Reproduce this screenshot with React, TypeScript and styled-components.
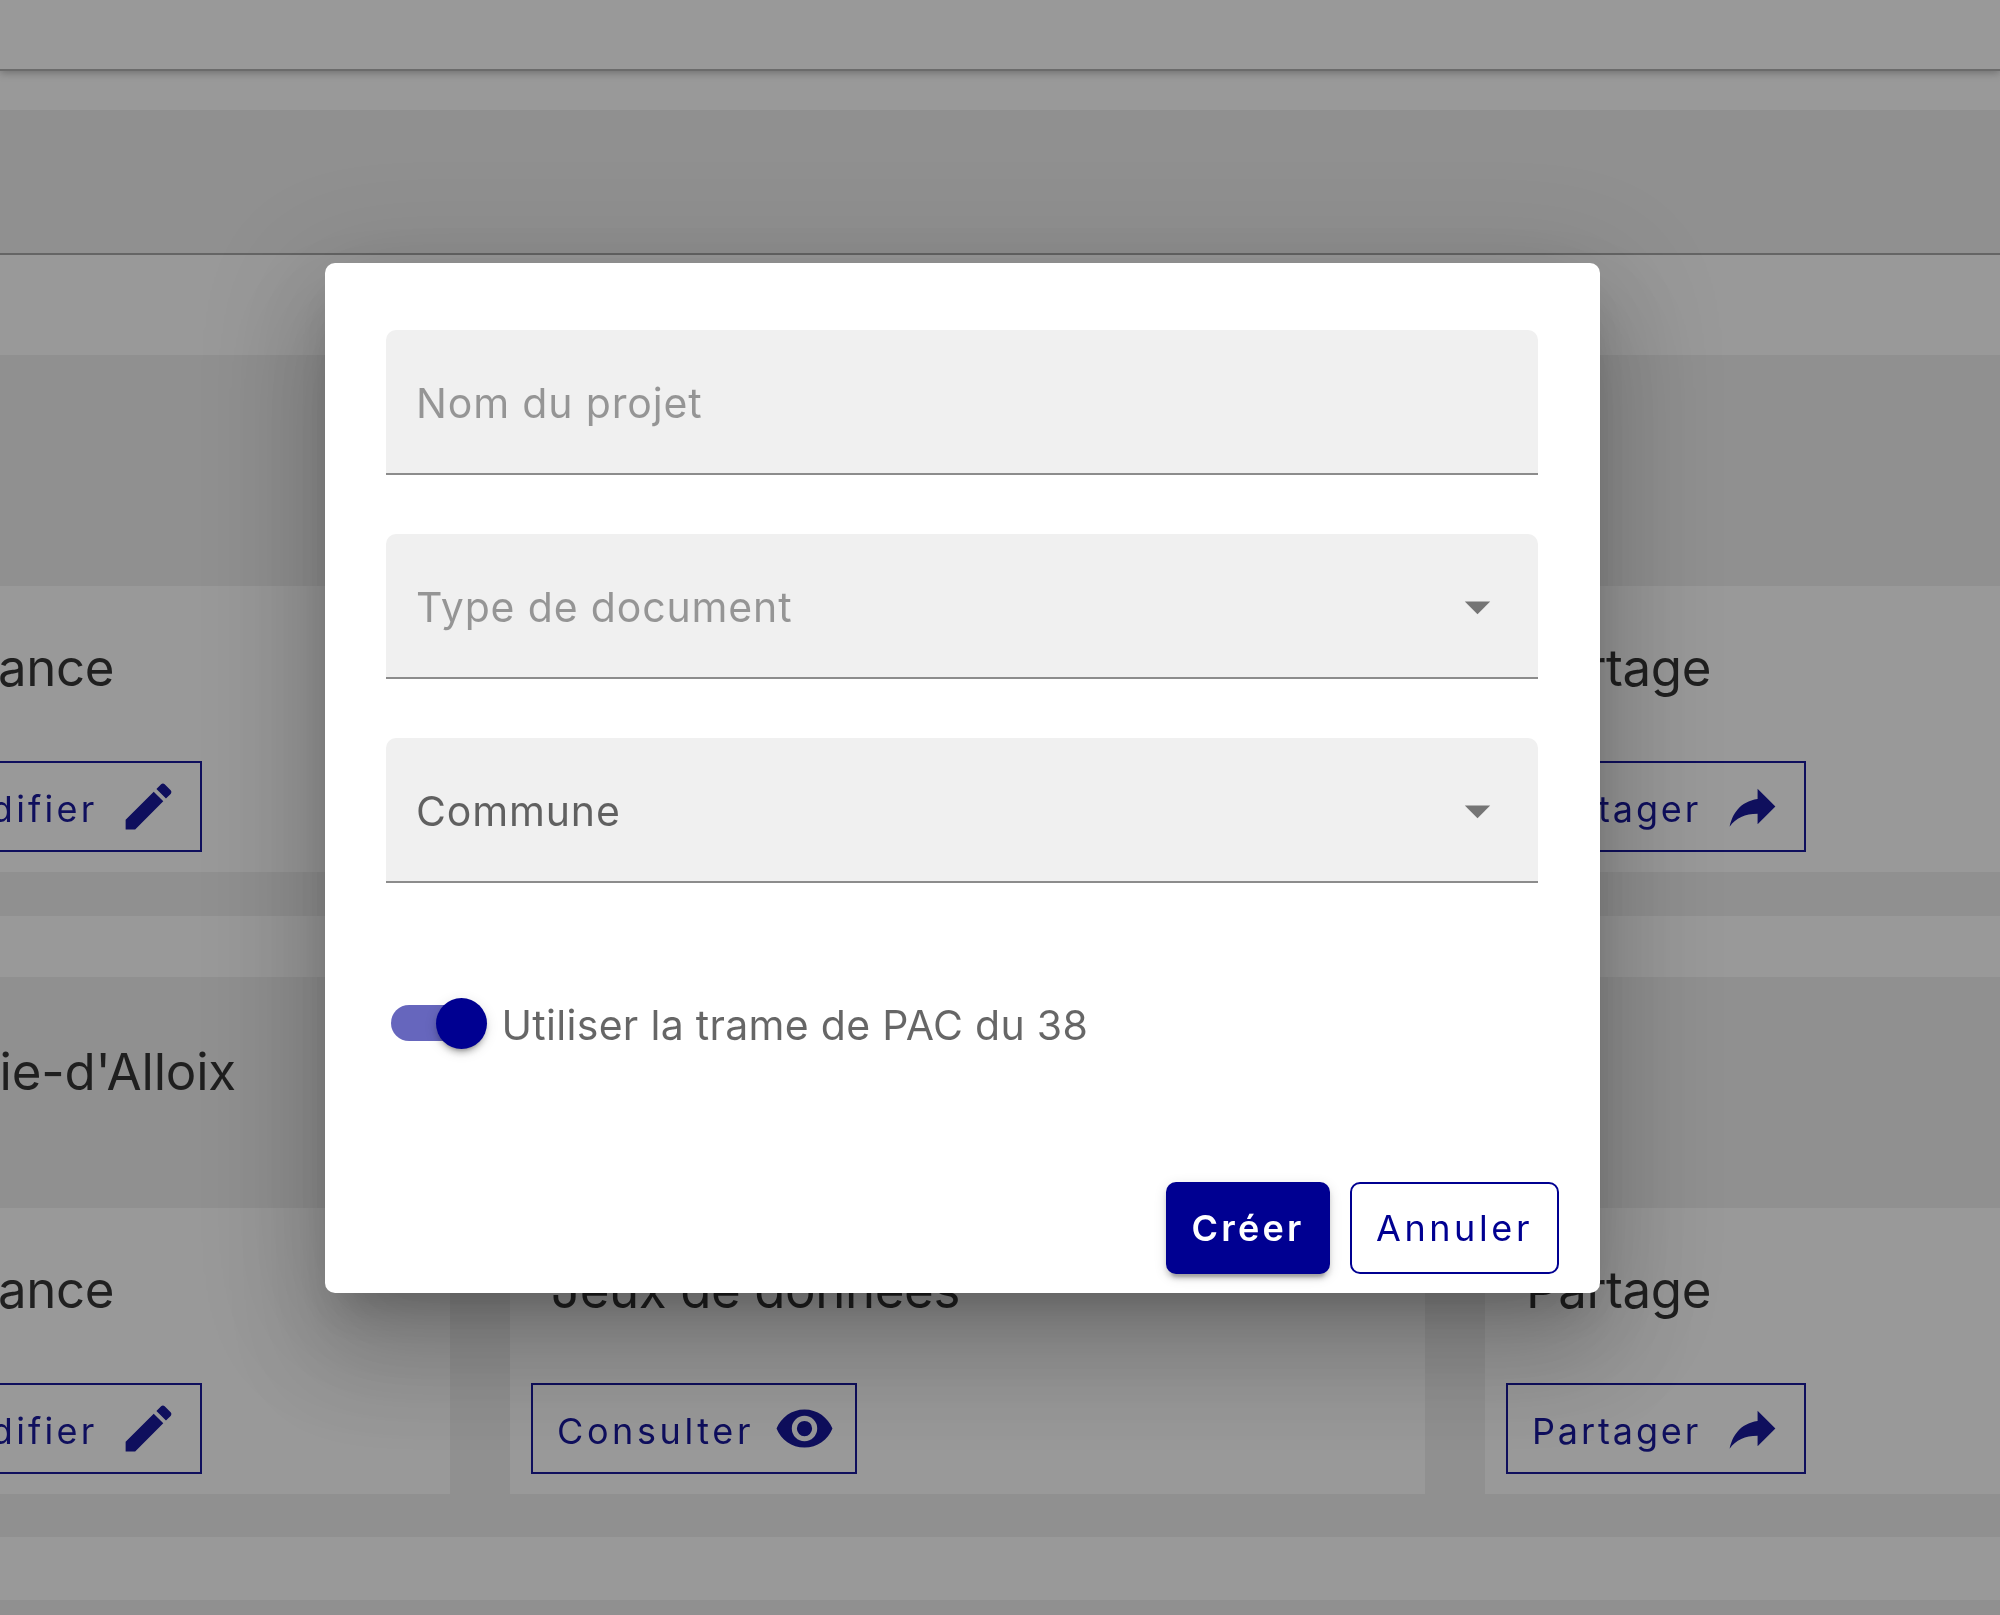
import React from "react";
import styled, { createGlobalStyle } from "styled-components";

const Global = createGlobalStyle`
  html, body { margin: 0; padding: 0; background: #8f8f8f; }
  body { font-family: Inter, "Noto Sans", "Liberation Sans", sans-serif; overflow: hidden; }
  #root { width: 2000px; height: 1615px; overflow: hidden; position: relative; filter: blur(0.55px); }
`;

const NAVY = "#000091";
const PENCIL = "M20.71,7.04C21.1,6.65 21.1,6 20.71,5.63L18.37,3.29C18,2.9 17.35,2.9 16.96,3.29L15.12,5.12L18.87,8.87M3,17.25V21H6.75L17.81,9.93L14.06,6.18L3,17.25Z";
const SHARE = "M21,12L14,5V9C7,10 4,15 3,20C5.5,16.5 9,14.9 14,14.9V19L21,12Z";
const EYE = "M12,9A3,3 0 0,0 9,12A3,3 0 0,0 12,15A3,3 0 0,0 15,12A3,3 0 0,0 12,9M12,17A5,5 0 0,1 7,12A5,5 0 0,1 12,7A5,5 0 0,1 17,12A5,5 0 0,1 12,17M12,4.5C7,4.5 2.73,7.61 1,12C2.73,16.39 7,19.5 12,19.5C17,19.5 21.27,16.39 23,12C21.27,7.61 17,4.5 12,4.5Z";
const CARET = "M7,10L12,15L17,10H7Z";

const Page = styled.div`
  width: 2000px;
  height: 1615px;
  background: #eeeeee;
  display: flex;
  flex-direction: column;
`;
const TopBar = styled.header`
  height: 69px;
  background: #fff;
  position: relative;
  box-shadow: 0 2px 0 #aaaaaa, 0 4px 8px rgba(0, 0, 0, 0.3);
`;
const WhiteBand = styled.div<{ $h: number }>`
  height: ${(p) => p.$h}px;
  flex: none;
  background: #fff;
`;
const GrayBand = styled.div<{ $h: number }>`
  height: ${(p) => p.$h}px;
  flex: none;
`;
const Divider = styled.hr`
  margin: 0;
  border: 0;
  height: 2px;
  flex: none;
  background: #a0a0a0;
`;
const CardGrid = styled.section`
  display: grid;
  grid-template-columns: 640px 915px 640px;
  column-gap: 60px;
  margin-left: -190px;
  width: 2400px;
  flex: none;
`;
const Card = styled.article`
  display: flex;
  flex-direction: column;
`;
const Banner = styled.div<{ $endPad?: number }>`
  height: 231px;
  box-sizing: border-box;
  display: flex;
  align-items: center;
  justify-content: flex-end;
  padding-right: ${(p) => p.$endPad ?? 0}px;
  padding-bottom: 42px;
  font-size: 51px;
  letter-spacing: -0.2px;
  color: rgba(0, 0, 0, 0.87);
  white-space: nowrap;
`;
const CardBody = styled.div<{ $alignEnd?: number }>`
  height: 286px;
  box-sizing: border-box;
  background: #fff;
  padding: 52px 21px 20px;
  display: flex;
  flex-direction: column;
  justify-content: space-between;
  align-items: ${(p) => (p.$alignEnd !== undefined ? "flex-end" : "flex-start")};
  padding-right: ${(p) => p.$alignEnd ?? 21}px;
`;
const CardTitle = styled.h3<{ $shift?: number }>`
  margin: 0 ${(p) => p.$shift ?? 0}px 0 20px;
  font-size: 51px;
  line-height: 60px;
  font-weight: 400;
  letter-spacing: -0.4px;
  color: rgba(0, 0, 0, 0.87);
  white-space: nowrap;
`;
const ActionButton = styled.a<{ $w?: number }>`
  display: inline-flex;
  align-items: center;
  justify-content: space-between;
  height: 91px;
  width: ${(p) => (p.$w ? `${p.$w}px` : "auto")};
  box-sizing: border-box;
  border: 2.5px solid ${NAVY};
  padding: 0 21.5px 0 24px;
  font-size: 36px;
  font-weight: 400;
  color: ${NAVY};
  white-space: nowrap;
  svg { margin-left: 20px; fill: ${NAVY}; flex: none; }
`;
const ActionLabel = styled.span<{ $tracking: number }>`
  padding-top: 4px;
  letter-spacing: ${(p) => p.$tracking}em;
`;
const Overlay = styled.div`
  position: absolute;
  inset: 0;
  background: rgba(33, 33, 33, 0.46);
  padding: 263px 0 0 324.5px;
  box-sizing: border-box;
`;
const Dialog = styled.div`
  width: 1275.5px;
  height: 1030px;
  box-sizing: border-box;
  background: #fff;
  border-radius: 10px;
  display: flex;
  flex-direction: column;
  box-shadow: 0 28px 38px -18px rgba(0, 0, 0, 0.2), 0 61px 97px 8px rgba(0, 0, 0, 0.14), 0 23px 118px 20px rgba(0, 0, 0, 0.12);
`;
const Form = styled.form`
  padding: 67px 62px 0 61.5px;
  display: flex;
  flex-direction: column;
  gap: 59.5px;
`;
const Field = styled.div`
  height: 144.5px;
  box-sizing: border-box;
  background: #f0f0f0;
  border-bottom: 2.5px solid #8c8c8c;
  border-radius: 10px 10px 0 0;
  padding: 2px 30.5px 0 30px;
  display: flex;
  align-items: center;
  justify-content: space-between;
  svg { fill: #757575; flex: none; }
`;
const FieldText = styled.span<{ $filled?: boolean }>`
  font-size: 41px;
  letter-spacing: 0.85px;
  padding-top: 2px;
  color: ${(p) => (p.$filled ? "rgba(0,0,0,0.6)" : "rgba(0,0,0,0.38)")};
`;
const SwitchRow = styled.div`
  display: flex;
  align-items: center;
  gap: 19px;
  margin: 115px 0 0 66px;
  height: 51px;
`;
const SwitchTrack = styled.span`
  display: block;
  position: relative;
  width: 92px;
  height: 36px;
  border-radius: 18px;
  background: rgba(0, 0, 145, 0.6);
  flex: none;
`;
const SwitchThumb = styled.span`
  position: absolute;
  right: -4.5px;
  top: -7.5px;
  width: 51px;
  height: 51px;
  border-radius: 50%;
  background: ${NAVY};
  box-shadow: 0 5px 3px -3px rgba(0, 0, 0, 0.2), 0 5px 5px rgba(0, 0, 0, 0.14), 0 3px 13px rgba(0, 0, 0, 0.12);
`;
const SwitchLabel = styled.span`
  font-size: 41px;
  letter-spacing: 0.3px;
  color: rgba(0, 0, 0, 0.6);
  position: relative;
  top: 2px;
`;
const Actions = styled.div`
  margin-top: 133px;
  padding: 0 41px 0 0;
  display: flex;
  justify-content: flex-end;
  gap: 20px;
`;
const PrimaryButton = styled.button`
  height: 92px;
  width: 164px;
  border: 0;
  border-radius: 10px;
  background: ${NAVY};
  color: #fff;
  font: 600 36px Inter, sans-serif;
  letter-spacing: 0.0892em;
  padding: 0;
  box-shadow: 0 8px 3px -5px rgba(0, 0, 0, 0.2), 0 5px 5px rgba(0, 0, 0, 0.14), 0 3px 13px rgba(0, 0, 0, 0.12);
`;
const GhostButton = styled.button`
  height: 92px;
  width: 209px;
  box-sizing: border-box;
  border: 2.5px solid ${NAVY};
  border-radius: 10px;
  background: #fff;
  color: ${NAVY};
  font: 400 36px Inter, sans-serif;
  letter-spacing: 0.1em;
  padding: 0;
`;

const Icon = ({ d, size = 61 }: { d: string; size?: number }) => (
  <svg width={size} height={size} viewBox="0 0 24 24" aria-hidden="true">
    <path d={d} />
  </svg>
);

const Row = ({ commune }: { commune?: string }) => (
  <CardGrid>
    <Card>
      <Banner $endPad={214}>{commune}</Banner>
      <CardBody $alignEnd={248}>
        <CardTitle $shift={88}>Échéance</CardTitle>
        <ActionButton>
          <ActionLabel $tracking={0.0892}>Modifier</ActionLabel>
          <Icon d={PENCIL} />
        </ActionButton>
      </CardBody>
    </Card>
    <Card>
      <Banner />
      <CardBody>
        <CardTitle>Jeux de données</CardTitle>
        <ActionButton $w={326}>
          <ActionLabel $tracking={0.1}>Consulter</ActionLabel>
          <Icon d={EYE} />
        </ActionButton>
      </CardBody>
    </Card>
    <Card>
      <Banner />
      <CardBody>
        <CardTitle>Partage</CardTitle>
        <ActionButton $w={300}>
          <ActionLabel $tracking={0.08}>Partager</ActionLabel>
          <Icon d={SHARE} />
        </ActionButton>
      </CardBody>
    </Card>
  </CardGrid>
);

export default function App() {
  return (
    <>
      <Global />
      <Page>
        <TopBar />
        <WhiteBand $h={41} />
        <GrayBand $h={143} />
        <Divider />
        <WhiteBand $h={100} />
        <Row />
        <GrayBand $h={44} />
        <WhiteBand $h={61} />
        <Row commune="Sainte-Marie-d'Alloix" />
        <GrayBand $h={43} />
        <WhiteBand $h={63} />
      </Page>
      <Overlay>
        <Dialog>
          <Form>
            <Field>
              <FieldText>Nom du projet</FieldText>
            </Field>
            <Field>
              <FieldText>Type de document</FieldText>
              <Icon d={CARET} />
            </Field>
            <Field>
              <FieldText $filled>Commune</FieldText>
              <Icon d={CARET} />
            </Field>
          </Form>
          <SwitchRow>
            <SwitchTrack>
              <SwitchThumb />
            </SwitchTrack>
            <SwitchLabel>Utiliser la trame de PAC du 38</SwitchLabel>
          </SwitchRow>
          <Actions>
            <PrimaryButton type="button">Créer</PrimaryButton>
            <GhostButton type="button">Annuler</GhostButton>
          </Actions>
        </Dialog>
      </Overlay>
    </>
  );
}
